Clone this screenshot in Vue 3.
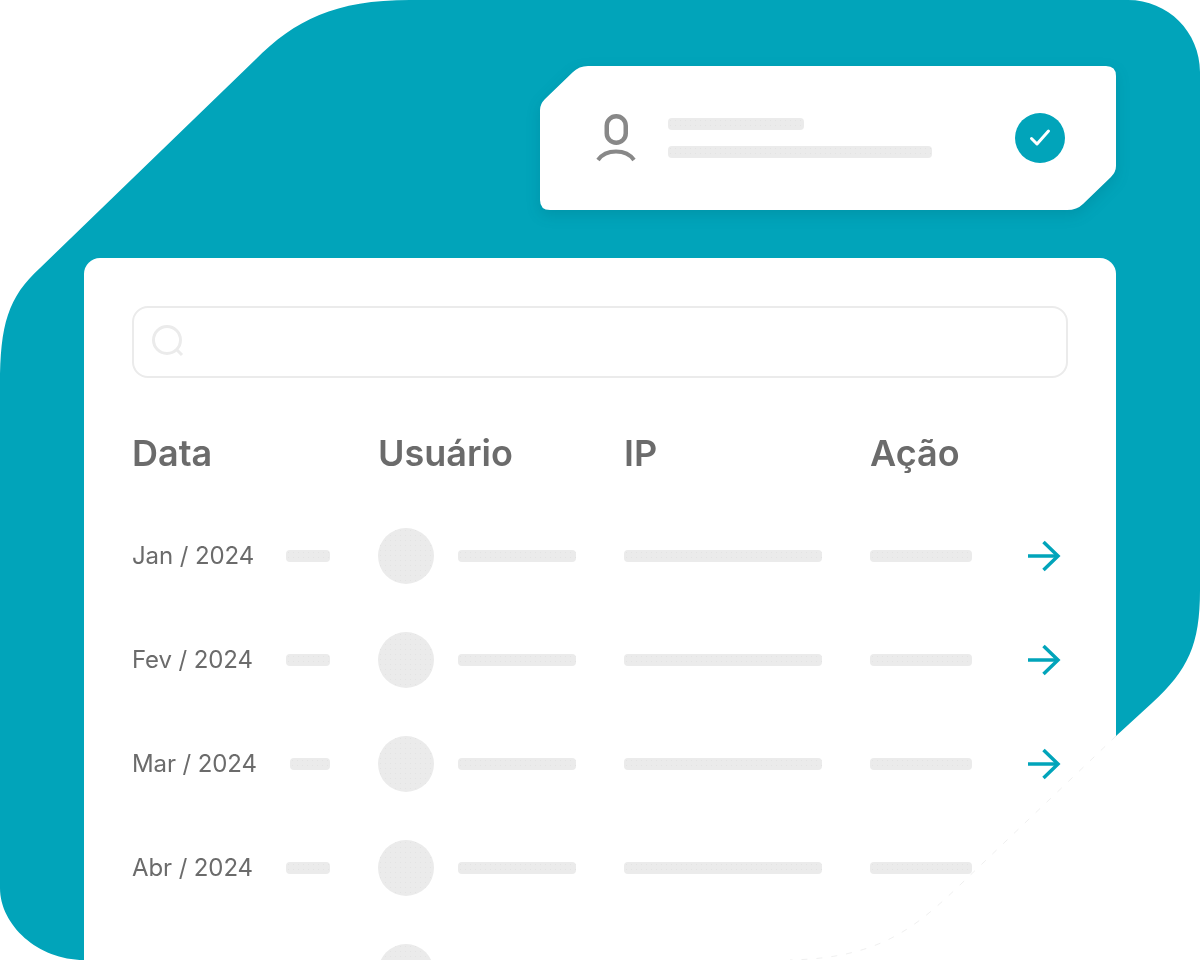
<template>
  <div class="scene">
    <svg class="blob" width="1200" height="960" viewBox="0 0 1200 960">
      <path :d="backdrop" fill="#01a4ba" />
    </svg>

    <div class="content">
      <div class="notice-wrap">
        <div class="notice">
          <svg class="person" width="40" height="48" viewBox="0 0 40 48" fill="none" stroke="#888888">
            <rect x="10.750" y="2.250" width="19" height="26.500" rx="9.500" stroke-width="4.500" />
            <path d="M2 46C6.500 39.500 12.500 37.500 20 37.500C27.500 37.500 33.500 39.500 38 46" stroke-width="4" />
          </svg>
          <div class="lines">
            <span class="bar short"></span>
            <span class="bar long"></span>
          </div>
          <div class="check">
            <svg width="24" height="24" viewBox="0 0 24 24" fill="none" stroke="#fff" stroke-width="3" stroke-linecap="round" stroke-linejoin="round">
              <path d="M3.500 12.500L9 18L20.500 5" />
            </svg>
          </div>
        </div>
      </div>

      <div class="panel">
        <div class="search">
          <svg width="36" height="36" viewBox="0 0 36 36" fill="none" stroke="#ebebeb" stroke-width="3">
            <circle cx="16" cy="16" r="13.500" />
            <path d="M25 25L31 31" />
          </svg>
        </div>

        <div class="grid head">
          <div>Data</div>
          <div>Usuário</div>
          <div>IP</div>
          <div>Ação</div>
        </div>

        <div v-for="(row, i) in rows" :key="i" class="grid row">
          <div v-if="row.label" class="date">
            <span class="label">{{ row.label }}</span>
            <span class="bar" :style="{ width: row.bar + 'px' }"></span>
          </div>
          <div v-else></div>
          <div class="user">
            <span class="avatar"></span>
            <span class="bar user-bar"></span>
          </div>
          <div><span class="bar ip-bar"></span></div>
          <div class="action">
            <span class="bar action-bar"></span>
            <svg width="34" height="32" viewBox="0 0 34 32" fill="none" stroke="#01a4ba" stroke-width="3.500">
              <path d="M1 16H31" />
              <path d="M16.500 2L31 16L16.500 30" />
            </svg>
          </div>
        </div>
      </div>
    </div>

    <svg class="edge" width="1200" height="960" viewBox="0 0 1200 960">
      <path d="M1116 736L961 884C915 928 880 958 790 960" fill="none" stroke="#e4e4e4" stroke-width="0.600" stroke-dasharray="6 9" />
    </svg>
  </div>
</template>

<script setup>
// the part under the panel runs straight, only the clip on .content shows that corner
const backdrop = 'M410 0L1128 0C1168 0 1200 32 1200 72L1200 590C1200 645 1188 670 1152 703L1116 736L84 960C38 960 0 925 0 888L0 385C0 325 8 297 40 268L255 60C295 20 335 0 410 0Z'

const rows = [
  { label: 'Jan / 2024', bar: 44 },
  { label: 'Fev / 2024', bar: 44 },
  { label: 'Mar / 2024', bar: 40 },
  { label: 'Abr / 2024', bar: 44 },
  { label: '', bar: 0 }
]
</script>

<style>
body {
  background: #fff;
}
</style>

<style scoped>
.scene {
  position: relative;
  width: 1200px;
  height: 960px;
  overflow: hidden;
  font-family: Inter, "Liberation Sans", sans-serif;
  color: #6b6b6b;
}

.blob,
.edge {
  position: absolute;
  top: 0;
  left: 0;
}

.edge {
  pointer-events: none;
}

.content {
  position: relative;
  box-sizing: border-box;
  height: 960px;
  padding: 66px 84px 0;
  clip-path: path('M410 0L1128 0C1168 0 1200 32 1200 72L1200 590C1200 645 1188 670 1152 703L1116 736L961 884C915 928 880 958 790 960L84 960C38 960 0 925 0 888L0 385C0 325 8 297 40 268L255 60C295 20 335 0 410 0Z');
}

.notice-wrap {
  margin-left: 456px;
  filter: drop-shadow(0 5px 7px rgba(0, 60, 70, 0.14));
}

.notice {
  display: flex;
  align-items: center;
  box-sizing: border-box;
  height: 144px;
  padding: 0 51px 0 56px;
  background: #fff;
  clip-path: path('M48 0L566 0Q576 0 576 10L576 100Q576 106 571 111L543 138Q537 144 527 144L10 144Q0 144 0 134L0 44Q0 38 5 33L33 6Q39 0 48 0Z');
}

.lines {
  display: flex;
  flex-direction: column;
  gap: 16px;
  margin-left: 32px;
}

.bar {
  display: block;
  height: 12px;
  border-radius: 4px;
  background-color: #ebebeb;
  background-image: radial-gradient(#e3e3e3 0.6px, transparent 0.8px);
  background-size: 5px 5px;
}

.short {
  width: 136px;
}

.long {
  width: 264px;
}

.check {
  display: flex;
  align-items: center;
  justify-content: center;
  width: 50px;
  height: 50px;
  margin-left: auto;
  border-radius: 50%;
  background: #01a4ba;
}

.panel {
  box-sizing: border-box;
  height: 702px;
  margin-top: 48px;
  padding: 48px;
  overflow: hidden;
  border-radius: 16px 16px 0 0;
  background: #fff;
}

.search {
  display: flex;
  align-items: center;
  box-sizing: border-box;
  height: 72px;
  padding-left: 17px;
  border: 2px solid #ebebeb;
  border-radius: 16px;
}

.grid {
  display: grid;
  grid-template-columns: 246px 246px 246px 1fr;
  align-items: center;
  will-change: transform;
}

.head {
  height: 44px;
  margin-top: 53px;
  margin-bottom: 29px;
  font-size: 36px;
  font-weight: 600;
  line-height: 44px;
}

.row {
  flex: none;
  height: 104px;
  font-size: 24px;
}

.label {
  margin-top: -2px;
  letter-spacing: -0.1px;
}

.date {
  display: flex;
  align-items: center;
  justify-content: space-between;
  width: 198px;
}

.user {
  display: flex;
  align-items: center;
  gap: 24px;
}

.avatar {
  width: 56px;
  height: 56px;
  border-radius: 50%;
  background-color: #ebebeb;
  background-image: radial-gradient(#e3e3e3 0.6px, transparent 0.8px);
  background-size: 5px 5px;
}

.user-bar {
  width: 118px;
}

.ip-bar {
  width: 198px;
}

.action {
  display: flex;
  align-items: center;
  gap: 55px;
}

.action-bar {
  width: 102px;
}
</style>
